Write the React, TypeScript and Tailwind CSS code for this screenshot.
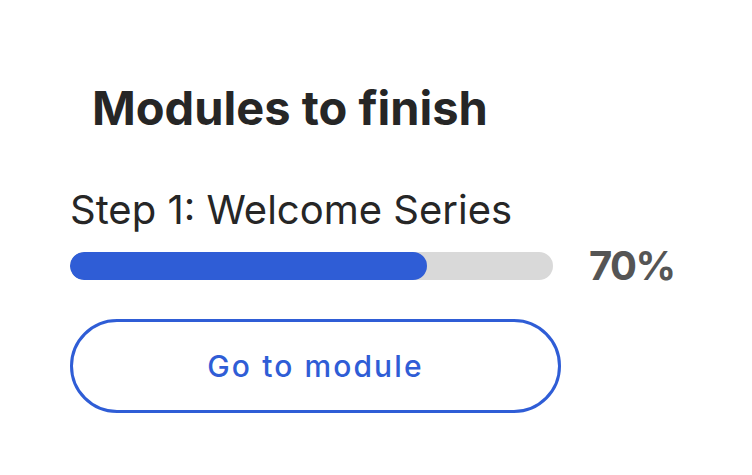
import React from "react";

export default function App() {
  return (
    <div className="w-[752px] h-[475px] bg-white font-['Inter',sans-serif] pl-[70px] pt-[84px]">
      <h1 className="ml-[22px] text-[47px] leading-none font-bold text-[#262626]">Modules to finish</h1>
      <p className="mt-[59px] text-[40px] leading-none font-normal text-[#262626]">Step 1: Welcome Series</p>
      <div className="mt-[16px] flex items-center">
        <div className="w-[483px] h-[28px] rounded-full bg-[#d9d9d9] overflow-hidden">
          <div className="h-full w-[357px] rounded-full bg-[#2f5dd6]" />
        </div>
        <span className="ml-[36px] text-[40px] leading-none font-bold tracking-[-0.04em] text-[#555555]">70%</span>
      </div>
      <button className="mt-[33px] w-[491px] h-[94px] rounded-full border-[3px] border-[#2f5dd6] bg-white flex items-center justify-center text-[30px] font-medium tracking-[0.07em] text-[#2f5dd6]">
        Go to module
      </button>
    </div>
  );
}
